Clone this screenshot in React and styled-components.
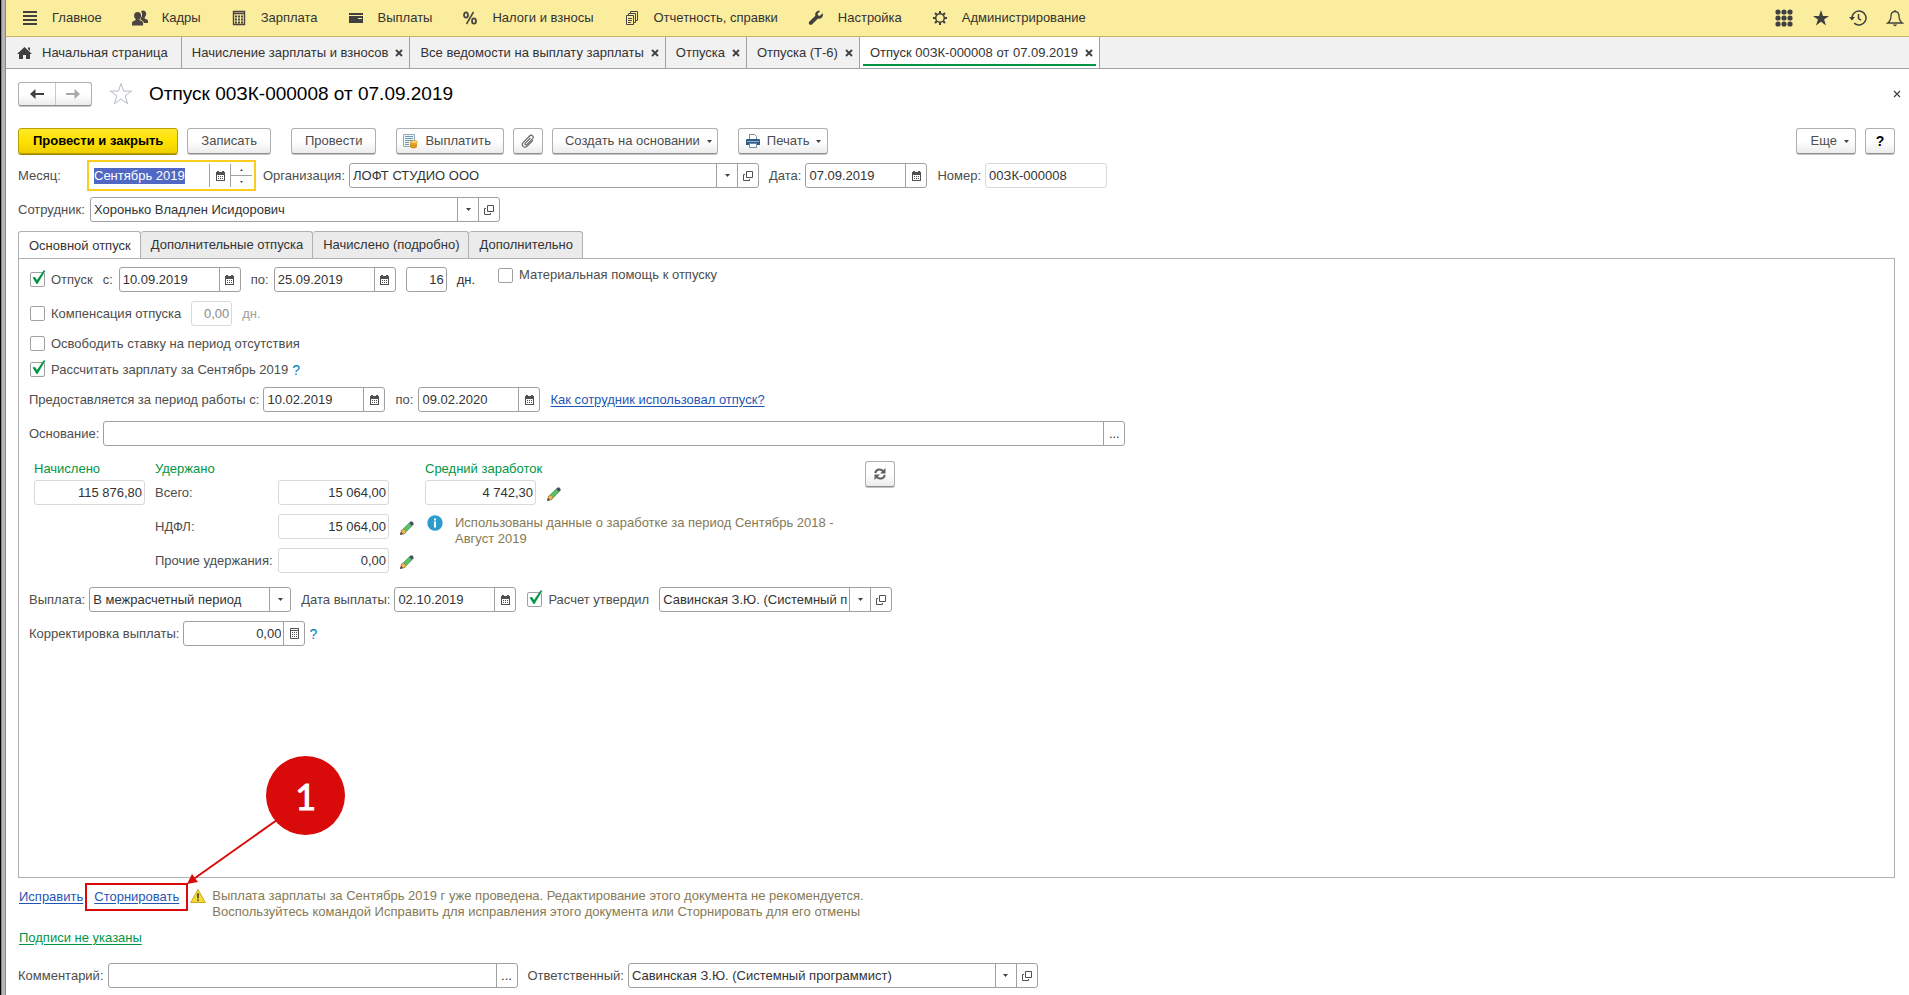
import React, { useEffect, useRef } from 'react';
import styled, { createGlobalStyle, css } from 'styled-components';

const GlobalStyle = createGlobalStyle`
  * {
    box-sizing: border-box;
  }

  body {
    margin: 0;
    background: #fff;
    color: #4d4d4d;
    font: 13px/16px 'Liberation Sans', Arial, sans-serif;
  }

  button,
  input,
  select {
    margin: 0;
    font: inherit;
    color: inherit;
  }
`;

const Window = styled.div`
  display: flex;
  flex-direction: column;
  min-height: 100vh;
  padding-left: 6px;
  background: linear-gradient(
    to right,
    #000 1px,
    #8c8888 1px 2px,
    #b8b4b4 2px 5px,
    #8c8888 5px 6px,
    #fff 6px
  );
`;

const MenuBar = styled.nav`
  display: flex;
  align-items: center;
  height: 37px;
  padding: 0 5px 0 16px;
  border-bottom: 1px solid #c4b565;
  background: #fbed9e;
  color: #333;
`;

const MenuItem = styled.button`
  display: flex;
  align-items: center;
  gap: 14px;
  margin-right: 30px;
  padding: 0;
  border: 0;
  background: none;
  white-space: nowrap;

  svg {
    flex: none;
  }
`;

const MenuTools = styled.div`
  display: flex;
  gap: 19px;
  margin-left: auto;
`;

const MenuTool = styled.button`
  display: flex;
  padding: 0;
  border: 0;
  background: none;
`;

const WindowTabs = styled.div`
  display: flex;
  height: 32px;
  border-bottom: 1px solid #a0a0a0;
  background: #f1f1f1;
  color: #333;
`;

const WindowTab = styled.div`
  position: relative;
  display: flex;
  align-items: center;
  gap: ${({ $home }) => ($home ? '10px' : '7px')};
  padding: ${({ $home }) => ($home ? '0 13px 0 11px' : '0 6px 0 10px')};
  border-right: 1px solid #a0a0a0;
  background: ${({ $active }) => ($active ? '#fff' : 'none')};
  white-space: nowrap;

  ${({ $active }) =>
    $active &&
    css`
      &::after {
        content: '';
        position: absolute;
        right: 3px;
        bottom: 2px;
        left: 3px;
        height: 2px;
        background: #009646;
      }
    `}
`;

const CloseButton = styled.button`
  display: flex;
  padding: 0;
  border: 0;
  background: none;
`;

const Page = styled.main`
  display: flex;
  flex: 1;
  flex-direction: column;
  padding: 13px 14px 7px 12px;
`;

const Header = styled.header`
  display: flex;
  align-items: center;
  height: 24px;
  margin: 0 -6px 22px 0;
`;

const raised = css`
  border: 1px solid #b0b0b0;
  border-bottom-color: #8f8f8f;
  border-radius: 3px;
  background: linear-gradient(#fff 50%, #ececec);
  box-shadow: 0 1px 0 #c4c4c4;
`;

const History = styled.div`
  ${raised}
  display: flex;
  width: 74px;
  height: 24px;
`;

const HistoryButton = styled.button`
  display: flex;
  flex: 1;
  align-items: center;
  justify-content: center;
  padding: 0;
  border: 0;
  background: none;

  & + & {
    border-left: 1px solid #c8c8c8;
  }
`;

const Favorite = styled.button`
  display: flex;
  margin: 0 16px 0 17px;
  padding: 0;
  border: 0;
  background: none;
`;

const Title = styled.h1`
  flex: 1;
  margin: 0;
  color: #000;
  font-size: 19px;
  font-weight: 400;
  line-height: 24px;
`;

const Toolbar = styled.div`
  display: flex;
  gap: 20px;
  margin-bottom: 9px;
`;

const ToolGroup = styled.div`
  display: flex;
  gap: 9px;

  &:last-child {
    margin-left: auto;
  }
`;

const Button = styled.button`
  ${raised}
  display: flex;
  align-items: center;
  justify-content: center;
  gap: 7px;
  height: 26px;
  min-width: 30px;
  padding: ${({ $pad = '0 13px' }) => $pad};
  white-space: nowrap;

  ${({ $primary }) =>
    $primary &&
    css`
      border-color: #b89f00;
      background: linear-gradient(#ffe92e, #ffe100 50%, #efcf00);
      box-shadow: 0 1px 0 #9c8800;
      color: #000;
      font-weight: 700;
    `}
`;

const HelpMark = styled.span`
  color: #000;
  font-size: 14px;
  font-weight: 700;
`;

const Row = styled.div`
  display: flex;
  align-items: center;
  gap: 10px;
  height: 25px;
  margin-bottom: 9px;
`;

const CheckRow = styled(Row)`
  height: 17px;
  gap: 4px;
`;

const Labeled = styled.div`
  display: flex;
  align-items: center;
  gap: 4px;
  white-space: nowrap;

  > label {
    min-width: ${({ $label = 0 }) => $label}px;
  }
`;

const Field = styled.div`
  display: flex;
  width: ${({ $width = 122 }) => $width}px;
  height: 25px;
  overflow: hidden;
  border: 1px solid ${({ $muted }) => ($muted ? '#d9d9d9' : '#a0a0a0')};
  border-radius: 3px;
  background: #fff;
  color: ${({ $disabled }) => ($disabled ? '#8c8c8c' : '#333')};
`;

const MonthField = styled(Field)`
  width: 169px;
  height: 31px;
  margin: 0 -3px;
  padding: 2px;
  border: 2px solid #fccc1e;
  border-radius: 0;
`;

const TextInput = styled.input`
  flex: 1;
  min-width: 0;
  padding: 0 2px 0 3px;
  border: 0;
  outline: 0;
  background: none;
  text-align: ${({ $right }) => ($right ? 'right' : 'left')};

  &::selection {
    background: #5068c4;
    color: #fff;
  }
`;

const Picker = styled.select`
  flex: 1;
  min-width: 0;
  padding: 0 3px;
  border: 0;
  outline: 0;
  appearance: none;
  background: none;
`;

const FieldButton = styled.button`
  display: flex;
  flex: none;
  align-items: center;
  justify-content: center;
  width: 21px;
  padding: 0;
  border: 0;
  border-left: 1px solid #a0a0a0;
  background: none;
`;

const Spinner = styled.div`
  display: flex;
  flex-direction: column;
  width: 22px;
  border-left: 1px solid #a0a0a0;
`;

const SpinnerButton = styled.button`
  display: flex;
  flex: 1;
  align-items: center;
  justify-content: center;
  padding: 0;
  border: 0;
  background: none;

  & + & {
    border-top: 1px solid #a0a0a0;
  }
`;

const CheckLabel = styled.label`
  position: relative;
  display: flex;
  align-items: center;
  gap: 6px;
  margin-left: 1px;
  white-space: nowrap;

  svg {
    position: absolute;
    top: -2px;
    left: 1px;
    display: none;
  }

  input:checked + svg {
    display: block;
  }
`;

const CheckInput = styled.input`
  flex: none;
  width: 15px;
  height: 15px;
  border: 1px solid #a0a0a0;
  border-radius: 2px;
  appearance: none;
  background: #fff;
`;

const RaisedCheck = styled.div`
  align-self: flex-start;
  margin-left: 12px;
`;

const Unit = styled.span`
  color: ${({ $disabled }) => ($disabled ? '#a0a0a0' : '#333')};
`;

const Hint = styled.button`
  padding: 0;
  border: 0;
  background: none;
  color: #0078c8;
  font-size: 14px;
`;

const Link = styled.a`
  color: ${({ $green }) => ($green ? '#009646' : '#1f56b5')};
  text-underline-offset: 2px;
  white-space: nowrap;
`;

const FormTabs = styled.div`
  display: flex;
  height: 27px;
`;

const FormTab = styled.button`
  height: ${({ $active }) => ($active ? 28 : 27)}px;
  padding: 0 9px 0 10px;
  border: 1px solid #b0b0b0;
  border-bottom: 0;
  border-radius: 3px 3px 0 0;
  background: ${({ $active }) => ($active ? '#fff' : '#ebebeb')};
  color: #333;
  white-space: nowrap;

  & + & {
    border-left: 0;
  }
`;

const Panel = styled.section`
  flex: 1;
  padding: 8px 10px;
  border: 1px solid #b0b0b0;
`;

const Totals = styled.div`
  display: flex;
  align-items: flex-start;
  margin: 15px 0 14px 5px;
`;

const TotalsGrid = styled.div`
  display: grid;
  grid-template-columns: ${({ $columns }) => $columns};
  align-items: center;
  row-gap: 9px;
`;

const TotalsColumn = styled.div`
  width: ${({ $width }) => $width}px;
`;

const TotalsTitle = styled.h2`
  margin: 0 0 3px;
  color: #009646;
  font-size: 13px;
  font-weight: 400;
  line-height: 16px;
`;

const EditButton = styled.button`
  display: flex;
  padding: 2px 0 0 11px;
  border: 0;
  background: none;
`;

const Note = styled.div`
  display: flex;
  align-items: flex-start;
  gap: ${({ $gap = 12 }) => $gap}px;
  color: #857a55;

  p {
    margin: 0;
  }

  svg {
    flex: none;
  }
`;

const EarningsNote = styled(Note)`
  width: 410px;
  margin: 10px 0 0 2px;
`;

const Actions = styled.div`
  display: flex;
  align-items: flex-start;
  gap: 11px;
  margin: 10px 0 10px 1px;
`;

const Callout = styled.span`
  position: relative;
  padding-top: 1px;
`;

const CalloutFrame = styled.span`
  position: absolute;
  inset: -5px -9px -6px;
  border: 2px solid #d80a0a;
  pointer-events: none;
`;

const CalloutArrow = styled.svg`
  position: absolute;
  bottom: 21px;
  left: calc(100% + 8px);
  overflow: visible;
  pointer-events: none;
`;

const CalloutBadge = styled.span`
  position: absolute;
  bottom: 70px;
  left: calc(100% + 87px);
  width: 79px;
  height: 79px;
  border-radius: 50%;
  background: #d80a0a;
  color: #fff;
  font: 36px/80px Lato, sans-serif;
  -webkit-text-stroke: 1px #fff;
  text-align: center;
`;

const ActionLink = styled.div`
  padding-top: 1px;
`;

const Signatures = styled.div`
  margin: 0 0 17px 1px;
`;

const FooterRow = styled(Row)`
  margin: 0;
`;

const BurgerIcon = () => (
  <svg width="16" height="16" fill="#404040">
    <path d="M1 1h14v2H1zM1 5h14v2H1zM1 9h14v2H1zM1 13h14v2H1z" />
  </svg>
);

const PeopleIcon = () => (
  <svg width="16" height="16" fill="#4a4540">
    <path d="M11 .5c2 0 3.200 1.400 3.200 3.300 0 1.600-.7 2.700-1.500 3.400v1.300l2.700 1.300c.5.300.6.900.6 3.200h-4.200c-.2-1.200-.5-1.700-1-2L8.600 9.800V8c1-.9 1.500-2.100 1.500-3.700 0-1.300-.4-2.200-1.100-2.900.5-.6 1.200-.9 2-.9z" />
    <path d="M5.600 2c2.200 0 3.500 1.500 3.500 3.500 0 1.700-.7 2.900-1.600 3.600v1l2.900 1.400c.6.300.7 1.500.7 4H0c0-2.500.1-3.700.7-4l3-1.400v-1C2.800 8.400 2.100 7.200 2.100 5.500 2.100 3.500 3.400 2 5.600 2z" />
  </svg>
);

const CalcIcon = () => (
  <svg width="16" height="16" fill="none" stroke="#4a4540">
    <path d="M2.500 1.500h11v13h-11zM2.500 3.500h11" strokeWidth="1.400" />
    <path d="M4 6.500h2m1 0h2m1 0h2M4 9.500h2m1 0h2m1 0h2M4 12.500h2m1 0h2m1 0h2" strokeWidth="2" />
  </svg>
);

const WalletIcon = () => (
  <svg width="16" height="16" fill="#404040">
    <path d="M1 3h14v2H1zM1 6h14v7H1z" />
    <path d="M10 8h4v1H10z" fill="#fbed9e" />
  </svg>
);

const PercentIcon = () => (
  <svg width="16" height="16" fill="none" stroke="#4a4540" strokeWidth="1.800">
    <ellipse cx="4" cy="5" rx="2" ry="2.700" />
    <ellipse cx="12" cy="11" rx="2" ry="2.700" />
    <path d="M11.500 2l-7 12" strokeWidth="1.500" />
  </svg>
);

const ReportsIcon = () => (
  <svg width="16" height="16" fill="none" stroke="#4a4540">
    <path d="M2.500 5.500h7v9h-7zM4.500 5V3.500h7v9H10M6.500 3V1.500h7v9H12M4 8.500h4M4 10.500h4M4 12.500h3" />
  </svg>
);

const WrenchIcon = () => (
  <svg width="16" height="16" fill="#404040">
    <path d="M14.600 3.200L12 5.800 9.900 5.500 9.700 3.500 12.200.9C10.500.4 8.700 1 7.800 2.400c-.7 1.100-.8 2.300-.4 3.400L1.400 11.500c-.8.800-.8 2 0 2.800s2 .8 2.800 0L10 8.500c1.300.4 2.800.1 3.900-1 1.100-1.200 1.400-2.900.7-4.300z" />
  </svg>
);

const GearIcon = () => (
  <svg width="16" height="16" fill="none" stroke="#404040">
    <circle cx="8" cy="8" r="4.300" strokeWidth="1.500" />
    <path
      d="M8 1v2.500M8 12.500V15M1 8h2.500M12.500 8H15M3 3l2 2M11 11l2 2M13 3l-2 2M5 11l-2 2"
      strokeWidth="2"
    />
  </svg>
);

const GridIcon = () => (
  <svg width="18" height="18" fill="#404040">
    {[3, 9, 15].map((y) =>
      [3, 9, 15].map((x) => <circle key={`${x}-${y}`} cx={x} cy={y} r="2.600" />),
    )}
  </svg>
);

const StarIcon = () => (
  <svg width="18" height="18" fill="#404040">
    <path d="M9 1l2 5.900h6l-4.900 3.600 1.900 6L9 12.800 4 16.500l1.900-6L1 6.900h6z" />
  </svg>
);

const ClockIcon = () => (
  <svg width="18" height="18" fill="none" stroke="#404040" strokeWidth="1.500">
    <path d="M3 9a7 7 0 1 1 2.200 5.100" />
    <path d="M9.500 5v4.500l2.500 1.700" />
    <path d="M0 8h6L3 11.500z" fill="#404040" stroke="none" />
  </svg>
);

const BellIcon = () => (
  <svg width="18" height="18" fill="none" stroke="#404040" strokeWidth="1.300">
    <path d="M9 1v1.500M9 2.500c-3 0-4 2.200-4 4.500 0 4-1.500 5.500-3.300 7h14.600C14.500 12.500 13 11 13 7c0-2.300-1-4.500-4-4.500z" />
    <path d="M6.500 15.500h5L9 17.500z" fill="#404040" stroke="none" />
  </svg>
);

const HomeIcon = () => (
  <svg width="15" height="14" fill="#404040">
    <path d="M7.500 1L15 8h-2v5H9V9H6v4H2V8H0zM11 1.500h2V5l-2-2z" />
  </svg>
);

const CrossIcon = ({ thin }) => (
  <svg width="8" height="8" stroke="#404040" strokeWidth={thin ? 1.2 : 1.8}>
    <path d="M1 1l6 6M7 1L1 7" />
  </svg>
);

const ArrowIcon = ({ right }) => (
  <svg width="14" height="10" fill={right ? '#a8a8a8' : '#404040'}>
    {right ? (
      <path d="M14 5L8.500 0v4H0v2h8.500v4z" />
    ) : (
      <path d="M0 5l5.500-5v4H14v2H5.500v4z" />
    )}
  </svg>
);

const FavoriteIcon = () => (
  <svg width="24" height="24" fill="#fff" stroke="#b4bac2">
    <path d="M12 1.500l2.600 7.600h8l-6.500 4.800 2.500 7.900-6.600-4.900-6.600 4.900 2.500-7.900L1.400 9.100h8z" />
  </svg>
);

const PayIcon = () => (
  <svg width="16" height="16" fill="none">
    <path d="M1.500 1.500h11v12h-11z" fill="#f2f6f9" stroke="#8fa9bb" />
    <path d="M3 3.500h8M3 5.500h8M3 7.500h8M3 9.500h4M3 11.500h4" stroke="#6f97b5" />
    <path d="M8 9v4.500c0 2.500 7 2.500 7 0V9z" fill="#e8a92c" />
    <ellipse cx="12" cy="9" rx="3.500" ry="1.500" fill="#ffdc6c" stroke="#c98a20" strokeWidth=".6" />
    <path d="M8 11.200c.5 1.800 6.500 1.800 7 0M8 13.200c.5 1.800 6.500 1.800 7 0" stroke="#b87818" strokeWidth=".7" />
  </svg>
);

const ClipIcon = () => (
  <svg width="14" height="14" fill="none" stroke="#606060" strokeWidth="1.100">
    <path d="M9.500 4L4.300 9.200c-.9 1 .5 2.300 1.500 1.400l5.700-5.800c2-2.200-.8-4.800-2.900-2.800L2.300 8.300c-2.700 3 .9 6.600 3.900 3.900L12 6.400" />
  </svg>
);

const PrintIcon = () => (
  <svg width="14" height="14" fill="none">
    <path d="M3.500 6V.5h5l2 2V6" fill="#fff" stroke="#6f8ba6" />
    <path d="M1.500 5h11C13.500 5 14 5.500 14 6.500V11H0V6.500C0 5.500.5 5 1.500 5z" fill="#2d5c86" />
    <path d="M1 7.500h12" stroke="#8fb0cc" />
    <path d="M3.500 9.500h7v4h-7z" fill="#fff" stroke="#6f8ba6" />
  </svg>
);

const CaretIcon = () => (
  <svg width="5" height="3" fill="#404040">
    <path d="M0 0h5L2.500 3z" />
  </svg>
);

const SpinIcon = ({ up }) => (
  <svg width="3" height="2" fill="#404040">
    <path d={up ? 'M0 2h3L1.500 0z' : 'M0 0h3L1.500 2z'} />
  </svg>
);

const CalendarIcon = () => (
  <svg width="9" height="10" fill="#505050">
    <path d="M0 1h9v9H0zM1 0h2v1H1zM6 0h2v1H6z" />
    <path d="M1 4h7v5H1z" fill="#fff" />
    <path d="M2 5h1v1H2zM4 5h1v1H4zM6 5h1v1H6zM2 7h1v1H2zM4 7h1v1H4zM6 7h1v1H6z" />
  </svg>
);

const OpenIcon = () => (
  <svg width="10" height="10" fill="none" stroke="#505050">
    <path d="M3.500.5h6v6h-6zM2 3.500H.5v6h6V8" />
  </svg>
);

const CalculatorIcon = () => (
  <svg width="9" height="11" fill="none" stroke="#505050">
    <path d="M.5.500h8v10h-8zM.5 2.500h8" />
    <path d="M2 4.500h1m1 0h1m1 0h1M2 6.500h1m1 0h1m1 0h1M2 8.500h1m1 0h1m1 0h1" />
  </svg>
);

const TickIcon = () => (
  <svg width="15" height="15" fill="#009646">
    <path d="M1.500 7.500L4 7l2 3L12.500.5h2L6.500 14H5.500z" />
  </svg>
);

const PencilIcon = () => (
  <svg width="14" height="14">
    <path d="M.5 13.500l1-4.500L4 7.500 6.500 10 5 12.500z" fill="#f0b454" stroke="#7a5a28" strokeWidth=".6" />
    <path d="M0 14l1-3 2 2z" fill="#404040" />
    <path d="M3.500 7.500l5.500-5.500 3 3L6.500 10.500z" fill="#5cbf66" stroke="#3a8a46" strokeWidth=".5" />
    <path d="M9 2l1.500-1.500h2L13.500 2v1.500L12 5z" fill="#465064" />
  </svg>
);

const InfoIcon = () => (
  <svg width="16" height="16">
    <circle cx="8" cy="8" r="7.700" fill="#2b9ccc" />
    <path d="M7 3.500h2v2H7zM7 6.500h2v6H7z" fill="#fff" />
  </svg>
);

const RefreshIcon = () => (
  <svg width="12" height="12" fill="none" stroke="#606060" strokeWidth="2">
    <path d="M1.300 5.200C1.800 1 7.500.2 9.300 3.500M10.700 6.800c-.5 4.200-6.200 5-8 1.700" />
    <path d="M11.500 0v5.500H6zM.5 12V6.500H6z" fill="#606060" stroke="none" />
  </svg>
);

const WarningIcon = () => (
  <svg width="16" height="16">
    <path d="M8 1.500L15.300 14.500H.7z" fill="#f5dc32" stroke="#c8a820" strokeLinejoin="round" />
    <path d="M7 5.500h2l-.3 5H7.300zM7.200 11.500h1.600V13H7.200z" fill="#404040" />
  </svg>
);

const MENU = [
  ['Главное', BurgerIcon],
  ['Кадры', PeopleIcon],
  ['Зарплата', CalcIcon],
  ['Выплаты', WalletIcon],
  ['Налоги и взносы', PercentIcon],
  ['Отчетность, справки', ReportsIcon],
  ['Настройка', WrenchIcon],
  ['Администрирование', GearIcon],
];

const TOOLS = [
  ['Функции', GridIcon],
  ['Избранное', StarIcon],
  ['История', ClockIcon],
  ['Уведомления', BellIcon],
];

const WINDOW_TABS = [
  'Начисление зарплаты и взносов',
  'Все ведомости на выплату зарплаты',
  'Отпуска',
  'Отпуска (Т-6)',
  'Отпуск 00ЗК-000008 от 07.09.2019',
];

const FORM_TABS = [
  'Основной отпуск',
  'Дополнительные отпуска',
  'Начислено (подробно)',
  'Дополнительно',
];

const DateField = ({ id, label, value, labelWidth }) => (
  <Labeled $label={labelWidth}>
    <label htmlFor={id}>{label}</label>
    <Field>
      <TextInput id={id} defaultValue={value} />
      <FieldButton aria-label="Выбрать дату">
        <CalendarIcon />
      </FieldButton>
    </Field>
  </Labeled>
);

const LookupField = ({ id, label, value, width, labelWidth }) => (
  <Labeled $label={labelWidth}>
    {label && <label htmlFor={id}>{label}</label>}
    <Field $width={width}>
      <TextInput id={id} defaultValue={value} aria-label={label ? undefined : value} />
      <FieldButton aria-label="Выбрать">
        <CaretIcon />
      </FieldButton>
      <FieldButton aria-label="Открыть">
        <OpenIcon />
      </FieldButton>
    </Field>
  </Labeled>
);

const TextField = ({ id, label, width, labelWidth }) => (
  <Labeled $label={labelWidth}>
    <label htmlFor={id}>{label}</label>
    <Field $width={width}>
      <TextInput id={id} />
      <FieldButton aria-label="Изменить текст">...</FieldButton>
    </Field>
  </Labeled>
);

const Amount = ({ id, label, value, width = 111, disabled, muted = true }) => (
  <Field $width={width} $muted={muted} $disabled={disabled}>
    <TextInput id={id} aria-label={label} defaultValue={value} disabled={disabled} $right />
  </Field>
);

const Checkbox = ({ label, checked }) => (
  <CheckLabel>
    <CheckInput type="checkbox" defaultChecked={checked} />
    <TickIcon />
    {label}
  </CheckLabel>
);

const App = () => {
  const month = useRef(null);

  useEffect(() => {
    month.current.focus();
    month.current.select();
  }, []);

  return (
    <Window>
      <GlobalStyle />
      <MenuBar>
        {MENU.map(([name, Icon]) => (
          <MenuItem key={name}>
            <Icon />
            {name}
          </MenuItem>
        ))}
        <MenuTools>
          {TOOLS.map(([name, Icon]) => (
            <MenuTool key={name} aria-label={name}>
              <Icon />
            </MenuTool>
          ))}
        </MenuTools>
      </MenuBar>

      <WindowTabs>
        <WindowTab $home>
          <HomeIcon />
          Начальная страница
        </WindowTab>
        {WINDOW_TABS.map((name, i) => (
          <WindowTab key={name} $active={i === WINDOW_TABS.length - 1}>
            {name}
            <CloseButton aria-label="Закрыть">
              <CrossIcon />
            </CloseButton>
          </WindowTab>
        ))}
      </WindowTabs>

      <Page>
        <Header>
          <History>
            <HistoryButton aria-label="Назад">
              <ArrowIcon />
            </HistoryButton>
            <HistoryButton aria-label="Вперед">
              <ArrowIcon right />
            </HistoryButton>
          </History>
          <Favorite aria-label="Добавить в избранное">
            <FavoriteIcon />
          </Favorite>
          <Title>Отпуск 00ЗК-000008 от 07.09.2019</Title>
          <CloseButton aria-label="Закрыть">
            <CrossIcon thin />
          </CloseButton>
        </Header>

        <Toolbar>
          <ToolGroup>
            <Button $primary $pad="0 14px">
              Провести и закрыть
            </Button>
            <Button>Записать</Button>
          </ToolGroup>
          <Button>Провести</Button>
          <ToolGroup>
            <Button $pad="0 12px 0 5px">
              <PayIcon />
              Выплатить
            </Button>
            <Button $pad="0" aria-label="Файлы">
              <ClipIcon />
            </Button>
            <Button $pad="0 5px 0 12px">
              Создать на основании
              <CaretIcon />
            </Button>
          </ToolGroup>
          <Button $pad="0 6px 0 7px">
            <PrintIcon />
            Печать
            <CaretIcon />
          </Button>
          <ToolGroup>
            <Button $pad="0 6px 0 14px">
              Еще
              <CaretIcon />
            </Button>
            <Button $pad="0" aria-label="Справка">
              <HelpMark>?</HelpMark>
            </Button>
          </ToolGroup>
        </Toolbar>

        <Row>
          <Labeled $label={68}>
            <label htmlFor="month">Месяц:</label>
            <MonthField>
              <TextInput id="month" ref={month} defaultValue="Сентябрь 2019" />
              <FieldButton aria-label="Выбрать месяц">
                <CalendarIcon />
              </FieldButton>
              <Spinner>
                <SpinnerButton aria-label="Следующий месяц">
                  <SpinIcon up />
                </SpinnerButton>
                <SpinnerButton aria-label="Предыдущий месяц">
                  <SpinIcon />
                </SpinnerButton>
              </Spinner>
            </MonthField>
          </Labeled>
          <LookupField id="org" label="Организация:" value="ЛОФТ СТУДИО ООО" width={410} />
          <DateField id="date" label="Дата:" value="07.09.2019" />
          <Labeled>
            <label htmlFor="number">Номер:</label>
            <Field $width={122} $muted>
              <TextInput id="number" defaultValue="00ЗК-000008" />
            </Field>
          </Labeled>
        </Row>

        <Row>
          <LookupField
            id="employee"
            label="Сотрудник:"
            value="Хоронько Владлен Исидорович"
            width={410}
            labelWidth={68}
          />
        </Row>

        <FormTabs>
          {FORM_TABS.map((name, i) => (
            <FormTab key={name} $active={i === 0}>
              {name}
            </FormTab>
          ))}
        </FormTabs>

        <Panel>
          <Row>
            <Checkbox label="Отпуск" checked />
            <DateField id="from" label="с:" value="10.09.2019" labelWidth={12} />
            <DateField id="to" label="по:" value="25.09.2019" labelWidth={19} />
            <Amount label="Количество дней" value="16" width={41} muted={false} />
            <Unit>дн.</Unit>
            <RaisedCheck>
              <Checkbox label="Материальная помощь к отпуску" />
            </RaisedCheck>
          </Row>
          <Row>
            <Checkbox label="Компенсация отпуска" />
            <Amount label="Дней компенсации" value="0,00" width={41} disabled />
            <Unit $disabled>дн.</Unit>
          </Row>
          <CheckRow>
            <Checkbox label="Освободить ставку на период отсутствия" />
          </CheckRow>
          <CheckRow>
            <Checkbox label="Рассчитать зарплату за Сентябрь 2019" checked />
            <Hint>?</Hint>
          </CheckRow>
          <Row>
            <DateField
              id="period-from"
              label="Предоставляется за период работы с:"
              value="10.02.2019"
            />
            <DateField id="period-to" label="по:" value="09.02.2020" labelWidth={19} />
            <Link href="#usage">Как сотрудник использовал отпуск?</Link>
          </Row>
          <Row>
            <TextField id="reason" label="Основание:" width={1022} />
          </Row>

          <Totals>
            <TotalsColumn $width={121}>
              <TotalsTitle>Начислено</TotalsTitle>
              <Amount label="Начислено" value="115 876,80" />
            </TotalsColumn>
            <TotalsColumn $width={270}>
              <TotalsTitle>Удержано</TotalsTitle>
              <TotalsGrid $columns="123px 111px 36px">
                <label htmlFor="total">Всего:</label>
                <Amount id="total" value="15 064,00" />
                <span />
                <label htmlFor="tax">НДФЛ:</label>
                <Amount id="tax" value="15 064,00" />
                <EditButton aria-label="Изменить НДФЛ">
                  <PencilIcon />
                </EditButton>
                <label htmlFor="other">Прочие удержания:</label>
                <Amount id="other" value="0,00" />
                <EditButton aria-label="Изменить прочие удержания">
                  <PencilIcon />
                </EditButton>
              </TotalsGrid>
            </TotalsColumn>
            <TotalsColumn $width={440}>
              <TotalsTitle>Средний заработок</TotalsTitle>
              <TotalsGrid $columns="111px 36px">
                <Amount label="Средний заработок" value="4 742,30" />
                <EditButton aria-label="Изменить средний заработок">
                  <PencilIcon />
                </EditButton>
              </TotalsGrid>
              <EarningsNote>
                <InfoIcon />
                <p>Использованы данные о заработке за период Сентябрь 2018 - Август 2019</p>
              </EarningsNote>
            </TotalsColumn>
            <Button $pad="0" aria-label="Обновить">
              <RefreshIcon />
            </Button>
          </Totals>

          <Row>
            <Labeled>
              <label htmlFor="payment">Выплата:</label>
              <Field $width={202}>
                <Picker id="payment">
                  <option>В межрасчетный период</option>
                </Picker>
                <FieldButton aria-label="Выбрать">
                  <CaretIcon />
                </FieldButton>
              </Field>
            </Labeled>
            <DateField id="pay-date" label="Дата выплаты:" value="02.10.2019" />
            <Checkbox label="Расчет утвердил" checked />
            <LookupField id="approver" value="Савинская З.Ю. (Системный программист)" width={233} />
          </Row>
          <Row>
            <Labeled>
              <label htmlFor="correction">Корректировка выплаты:</label>
              <Field>
                <TextInput id="correction" defaultValue="0,00" $right />
                <FieldButton aria-label="Калькулятор">
                  <CalculatorIcon />
                </FieldButton>
              </Field>
              <Hint>?</Hint>
            </Labeled>
          </Row>
        </Panel>

        <Actions>
          <ActionLink>
            <Link href="#fix">Исправить</Link>
          </ActionLink>
          <Callout>
            <Link href="#reverse">Сторнировать</Link>
            <CalloutFrame />
            <CalloutArrow width="92" height="66" fill="#d80a0a">
              <path d="M90 2L8 60" stroke="#d80a0a" strokeWidth="2" />
              <path d="M0 66l5-10 6 8z" />
            </CalloutArrow>
            <CalloutBadge>1</CalloutBadge>
          </Callout>
          <Note $gap={6}>
            <WarningIcon />
            <p>
              Выплата зарплаты за Сентябрь 2019 г уже проведена. Редактирование этого документа не
              рекомендуется.
              <br />
              Воспользуйтесь командой Исправить для исправления этого документа или Сторнировать для
              его отмены
            </p>
          </Note>
        </Actions>

        <Signatures>
          <Link href="#signatures" $green>
            Подписи не указаны
          </Link>
        </Signatures>

        <FooterRow>
          <TextField id="comment" label="Комментарий:" width={410} />
          <LookupField
            id="responsible"
            label="Ответственный:"
            value="Савинская З.Ю. (Системный программист)"
            width={410}
          />
        </FooterRow>
      </Page>
    </Window>
  );
};

export default App;
